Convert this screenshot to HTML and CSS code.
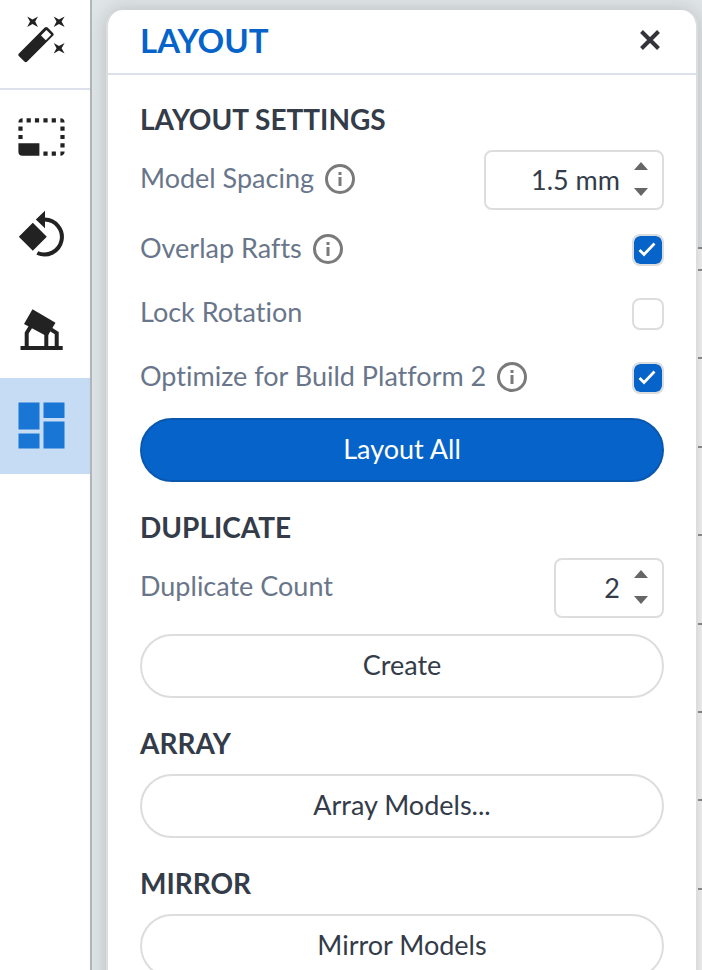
FILE: index.html
```html
<!DOCTYPE html>
<html lang="en">
<head>
<meta charset="utf-8">
<meta name="viewport" content="width=device-width, initial-scale=1">
<title>Layout</title>
<link rel="stylesheet" href="styles.css">
</head>
<body>
<div class="app">
  <nav class="toolbar" aria-label="Tools">
    <button class="tool tool-first" type="button" aria-label="One-click print">
      <svg class="tool-icon" viewBox="0 0 48 48">
        <path d="M1.200 37.200 26.800 11.600a2 2 0 0 1 2.800 0l5.400 5.400a2 2 0 0 1 0 2.800L9.200 45.600a2 2 0 0 1-2.800 0L.8 40a2 2 0 0 1 .4-2.800z"/>
        <path class="hollow" d="M28.400 14 33.200 18.800 27.800 24.200 23 19.400z"/>
        <path d="M9.200 .4 14.500 3.600 20 .4 17.200 5.600 20 11 14.500 8 9.200 11 12 5.600zM35.700 .4 41 3.600 46.600 .4 43.600 5.600 46.600 11 41 8 35.700 11 38.500 5.600zM35.700 27 41 30 46.600 27 43.600 32.300 46.600 37.600 41 34.600 35.700 37.600 38.500 32.300z"/>
      </svg>
    </button>
    <button class="tool" type="button" aria-label="Size">
      <svg class="tool-icon" viewBox="0.600 0.800 48 48">
        <path d="M1 30h21v12.500H5a4 4 0 0 1-4-4zM9.200 5h4.200v4.200H9.200zM17.500 5h4.200v4.200h-4.200zM26 5h4.200v4.200H26zM34.300 5h4.200v4.200h-4.200zM1 13.300h4.200v4.200H1zM1 21.700h4.200v4.200H1zM43 13.300h4.200v4.200H43zM43 21.700h4.200v4.200H43zM43 30h4.200v4.200H43zM26 38.300h4.200v4.200H26zM34.300 38.300h4.200v4.200h-4.200zM1 9.200A4 4 0 0 1 5.200 5v4.200zM43 5a4 4 0 0 1 4.200 4.200H43zM47.200 38.300a4 4 0 0 1-4.200 4.200v-4.200z"/>
      </svg>
    </button>
    <button class="tool" type="button" aria-label="Orientation">
      <svg class="tool-icon" viewBox="0 0 48 48">
        <path d="M14.800 12.700 28.800 26.700 14.800 40.700 .8 26.700zM17.800 9.500 27 .8v17.500z"/>
        <path class="stroke" d="M26.700 9.500A17.500 17.500 0 1 1 19.300 43"/>
      </svg>
    </button>
    <button class="tool" type="button" aria-label="Supports">
      <svg class="tool-icon" viewBox="0 0 48 48">
        <path d="M14.500 3.300 37.500 16.700 29.300 30.500 6 18zM2.500 40h42.200v4H2.500z"/>
        <path class="stroke" d="M13 20 8.700 27v14M28.300 27v14M33 23.500l5.700 3.500v14"/>
      </svg>
    </button>
    <button class="tool tool-active" type="button" aria-label="Layout" aria-pressed="true">
      <svg class="tool-icon" viewBox="0 0 48 48">
        <path d="M.5 .5h21v27h-21zM25.500 .5h21v15.500h-21zM.5 31.500h21v15h-21zM25.500 19.500h21v27h-21z"/>
      </svg>
    </button>
  </nav>

  <main class="workspace">
    <svg class="ruler" viewBox="0 0 10 970" preserveAspectRatio="none" aria-hidden="true">
      <path class="ruler-bed" d="M0 248h10v722H0z"/>
      <path class="ruler-lines" d="M0 248h10M0 270h10M0 358h10M0 447h10M0 535h10M0 624h10M0 712h10M0 800h10M0 889h10"/>
    </svg>

    <section class="panel" aria-labelledby="panel-title">
      <header class="panel-header">
        <h1 class="panel-title" id="panel-title">LAYOUT</h1>
        <button class="close" type="button" aria-label="Close">
          <svg class="close-icon" viewBox="0 0 20 20"><path d="M1.500 1.500l17 17M18.500 1.500l-17 17"/></svg>
        </button>
      </header>

      <div class="panel-body">
        <h2 class="heading heading-first">LAYOUT SETTINGS</h2>
        <div class="row row-field">
          <div class="caption">
            <label class="label" for="spacing">Model Spacing</label>
            <svg class="info" viewBox="0 0 30 30"><circle cx="15" cy="15" r="13.500"/><path d="M15 13v9M15 8v3"/></svg>
          </div>
          <div class="field">
            <input class="field-input" id="spacing" type="text" value="1.5 mm">
            <div class="spinner">
              <button class="step step-up" type="button" aria-label="Increase spacing"></button>
              <button class="step step-down" type="button" aria-label="Decrease spacing"></button>
            </div>
          </div>
        </div>
        <div class="checks">
          <div class="row">
            <div class="caption">
              <label class="label" for="overlap">Overlap Rafts</label>
              <svg class="info" viewBox="0 0 30 30"><circle cx="15" cy="15" r="13.500"/><path d="M15 13v9M15 8v3"/></svg>
            </div>
            <input class="check" id="overlap" type="checkbox" checked>
          </div>
          <div class="row">
            <div class="caption">
              <label class="label" for="lock">Lock Rotation</label>
            </div>
            <input class="check" id="lock" type="checkbox">
          </div>
          <div class="row">
            <div class="caption">
              <label class="label" for="optimize">Optimize for Build Platform 2</label>
              <svg class="info" viewBox="0 0 30 30"><circle cx="15" cy="15" r="13.500"/><path d="M15 13v9M15 8v3"/></svg>
            </div>
            <input class="check" id="optimize" type="checkbox" checked>
          </div>
        </div>
        <button class="button button-primary" type="button">Layout All</button>

        <h2 class="heading">DUPLICATE</h2>
        <div class="row row-field row-spaced">
          <div class="caption">
            <label class="label" for="count">Duplicate Count</label>
          </div>
          <div class="field field-small">
            <input class="field-input" id="count" type="text" value="2">
            <div class="spinner">
              <button class="step step-up" type="button" aria-label="Increase count"></button>
              <button class="step step-down" type="button" aria-label="Decrease count"></button>
            </div>
          </div>
        </div>
        <button class="button" type="button">Create</button>

        <h2 class="heading">ARRAY</h2>
        <button class="button" type="button">Array Models...</button>

        <h2 class="heading">MIRROR</h2>
        <button class="button" type="button">Mirror Models</button>
      </div>
    </section>
  </main>
</div>
</body>
</html>
```
FILE: styles.css
```css
* {
  box-sizing: border-box;
}

body {
  margin: 0;
  font-family: Lato, "Liberation Sans", sans-serif;
  font-size: 27px;
  font-variant-ligatures: none;
  color: #333c48;
}

button,
input {
  margin: 0;
  padding: 0;
  border: 0;
  background: none;
  font: inherit;
  color: inherit;
}

.app {
  display: flex;
  height: 100vh;
  overflow: hidden;
}

.toolbar {
  flex: 0 0 92px;
  background: #fff;
  border-right: 2px solid #b1b7bb;
}

.tool {
  display: flex;
  align-items: center;
  width: 100%;
  height: 96px;
  padding-left: 18px;
}

.tool-first {
  height: 90px;
  padding-bottom: 8px;
  border-bottom: 2px solid #dce1eb;
}

.tool-active {
  background: #c5dcf4;
}

.tool-icon {
  width: 48px;
  height: 48px;
  fill: #222;
}

.tool-icon .hollow {
  fill: #fff;
}

.tool-icon .stroke {
  fill: none;
  stroke: #222;
  stroke-width: 4;
}

.tool-active .tool-icon {
  fill: #1976d5;
}

.workspace {
  position: relative;
  flex: 1;
  min-width: 0;
  padding: 10px 4px 0 14px;
  background: #e0e5e7;
}

.ruler {
  position: absolute;
  top: 0;
  right: 0;
  width: 10px;
  height: 970px;
}

.ruler-bed {
  fill: #f7f7f7;
}

.ruler-lines {
  stroke: #919195;
  stroke-width: 2;
}

.panel {
  position: relative;
  background: #fff;
  background-clip: padding-box;
  border: 2px solid #dcdddf;
  border-top: 0;
  border-radius: 16px 16px 0 0;
  box-shadow: 0 0 20px rgba(0, 0, 0, 0.18);
}

.panel-header {
  display: flex;
  align-items: center;
  justify-content: space-between;
  height: 65px;
  padding: 0 32px 3px;
  border-bottom: 2px solid #dce1e9;
}

.panel-title {
  margin: 0;
  font-size: 33px;
  font-weight: 700;
  line-height: 40px;
  color: #0663c9;
}

.close {
  display: flex;
  padding: 4px;
}

.close-icon {
  width: 20px;
  height: 20px;
  stroke: #333339;
  stroke-width: 4;
}

.panel-body {
  padding: 0 32px 32px;
}

.heading {
  margin: 28px 0 14px;
  font-size: 28px;
  font-weight: 700;
  line-height: 34px;
}

.heading-first {
  margin-top: 27px;
}

.row {
  display: flex;
  align-items: center;
  justify-content: space-between;
  height: 64px;
}

.row-field {
  height: 60px;
}

.row-spaced {
  margin-bottom: 16px;
}

.checks {
  margin: 8px 0;
}

.caption {
  display: flex;
  align-items: center;
  gap: 11px;
  padding-bottom: 2px;
}

.label {
  padding-bottom: 2px;
  line-height: 34px;
  color: #69768a;
}

.info {
  width: 30px;
  height: 30px;
  fill: none;
  stroke: #7a7a7a;
  stroke-width: 3;
}

.field {
  display: flex;
  width: 180px;
  height: 60px;
  border: 2px solid #dcdddf;
  border-radius: 8px;
}

.field-small {
  width: 110px;
}

.field-input {
  flex: 1;
  min-width: 0;
  padding-bottom: 2px;
  text-align: right;
}

.spinner {
  display: flex;
  flex-direction: column;
  justify-content: space-between;
  padding: 10px 14px 12px;
}

.step {
  width: 14px;
  height: 8px;
  background: #666;
}

.step-up {
  clip-path: polygon(50% 0, 100% 100%, 0 100%);
}

.step-down {
  clip-path: polygon(0 0, 100% 0, 50% 100%);
}

.check {
  appearance: none;
  width: 32px;
  height: 32px;
  border: 2px solid #dcdddf;
  border-radius: 8px;
}

.check:checked {
  background: #0663c9 url("data:image/svg+xml,%3Csvg xmlns='http://www.w3.org/2000/svg' viewBox='0 0 28 28'%3E%3Cpath d='M5.500 14l4.500 4.500L20.500 7.500' fill='none' stroke='white' stroke-width='2.700'/%3E%3C/svg%3E") padding-box;
  background-clip: padding-box;
}

.button {
  display: block;
  width: 100%;
  height: 64px;
  padding-bottom: 4px;
  border: 2px solid #dcdddf;
  border-radius: 32px;
}

.button-primary {
  background: #0663c9;
  border-color: #0a57b0;
  color: #fff;
}
```
